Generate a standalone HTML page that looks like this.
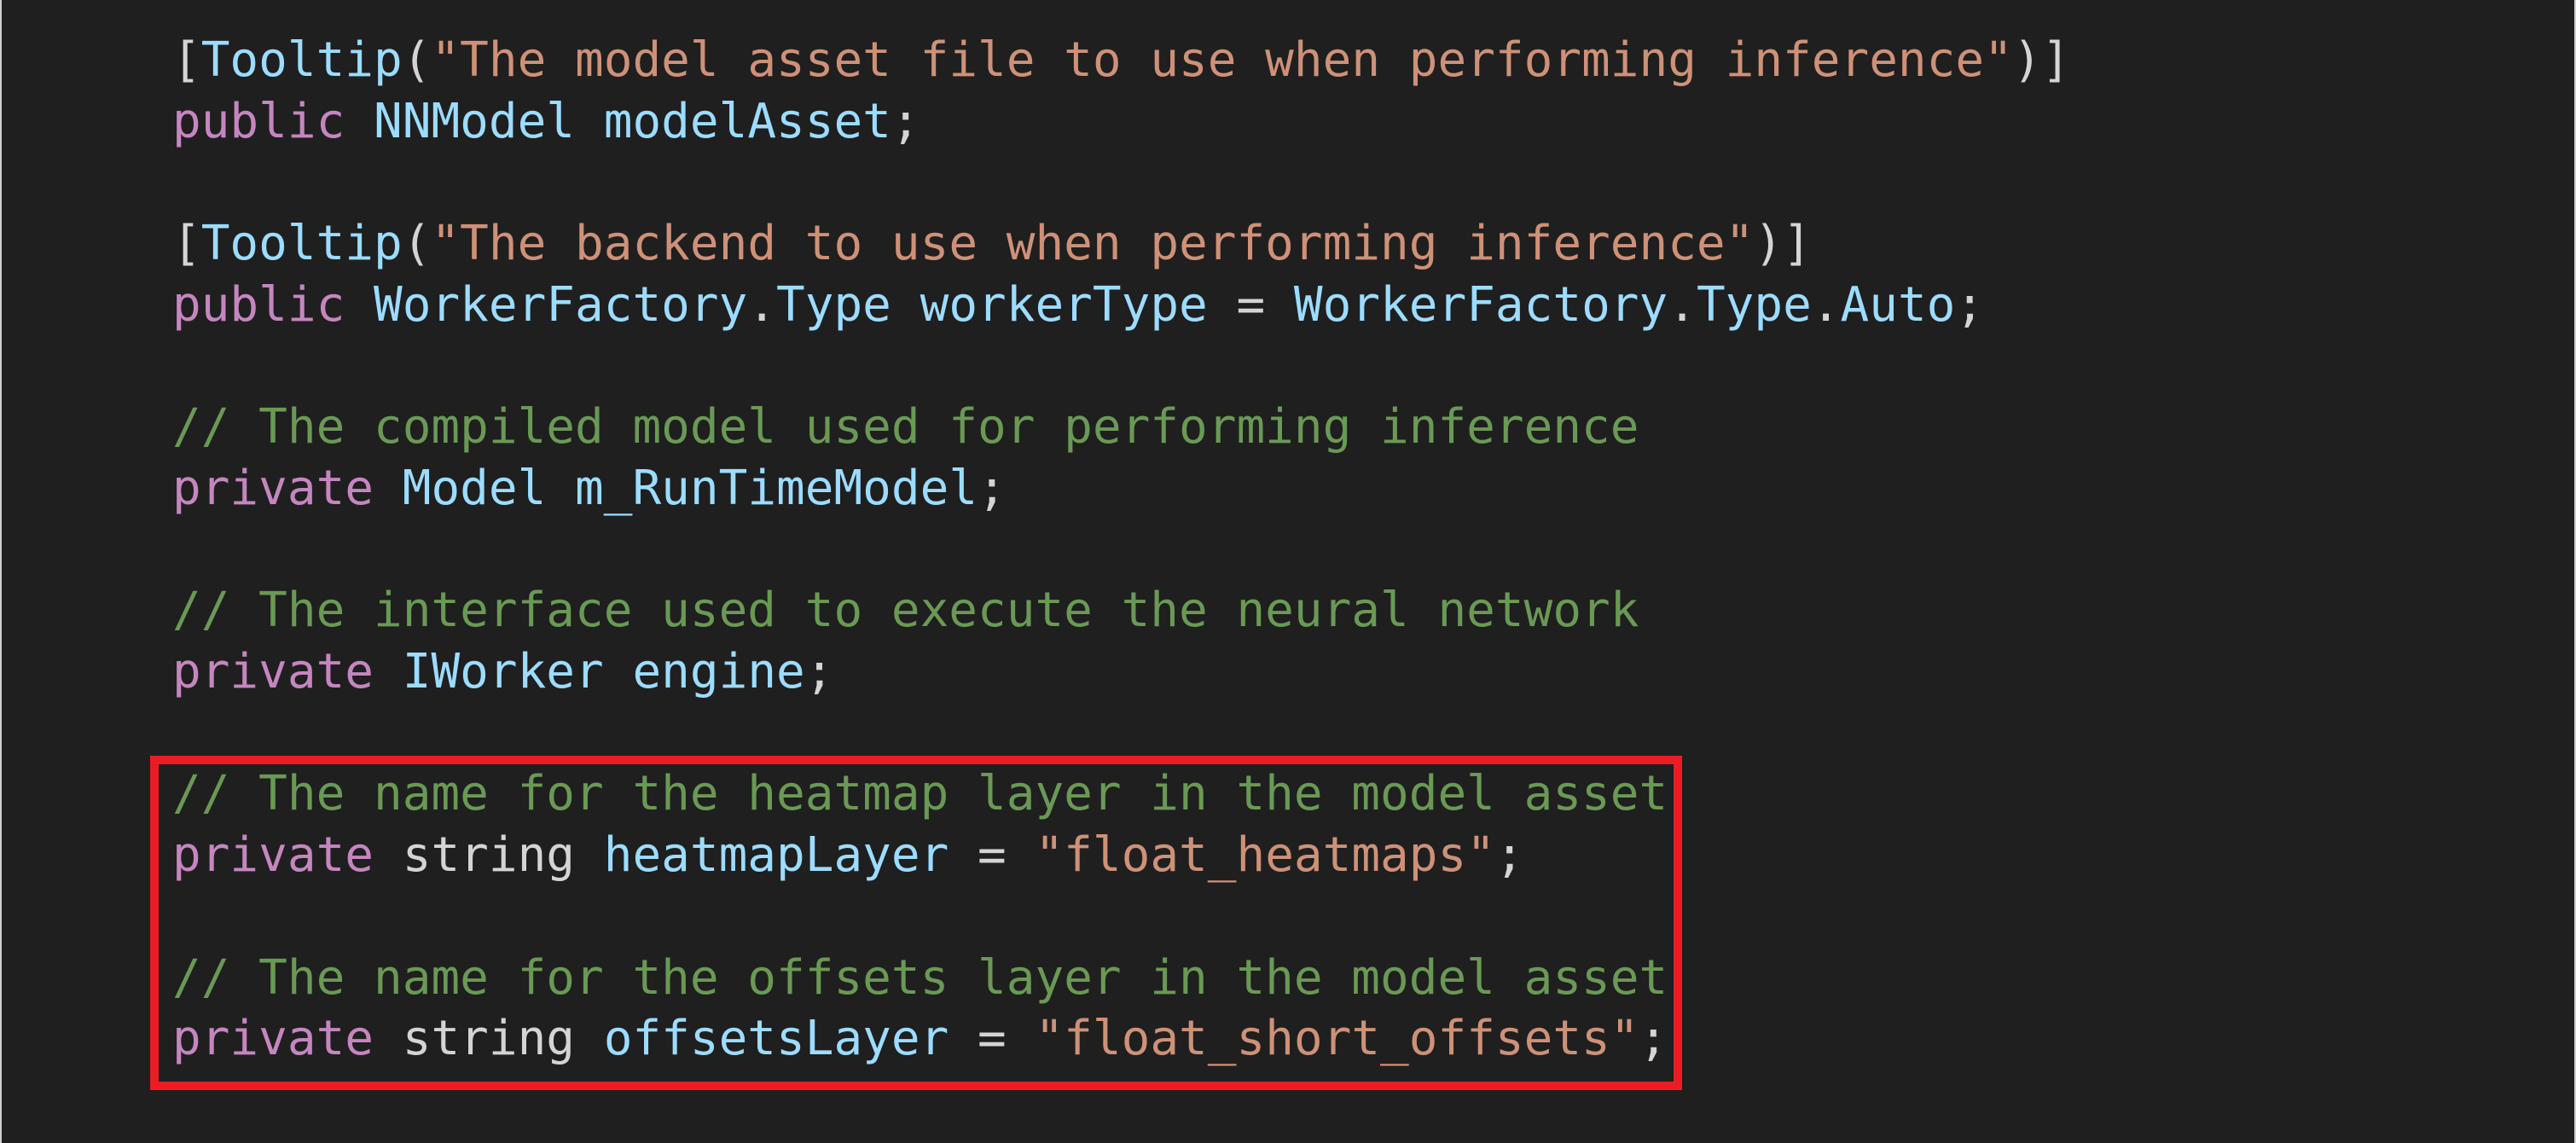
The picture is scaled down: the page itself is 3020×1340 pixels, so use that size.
<!DOCTYPE html>
<html><head><meta charset="utf-8"><style>
html,body{margin:0;padding:0}
body{width:3020px;height:1340px;background:#1f1f1f;position:relative;overflow:hidden;border-left:2px solid #cfcfcf;border-right:2px solid #cfcfcf;box-sizing:border-box}
pre{position:absolute;left:200px;top:35px;margin:0;font-family:"DejaVu Sans Mono","Liberation Mono",monospace;font-size:56px;line-height:71.7px;color:#d4d4d4;white-space:pre}
.k{color:#c586c0}.t{color:#9cdcfe}.s{color:#ce9178}.c{color:#6a9955}
.box{position:absolute;left:174px;top:886px;width:1776px;height:372px;border:10px solid #ec1c24}
</style></head><body>
<pre>[<span class="t">Tooltip</span>(<span class="s">"The model asset file to use when performing inference"</span>)]
<span class="k">public</span> <span class="t">NNModel</span> <span class="t">modelAsset</span>;

[<span class="t">Tooltip</span>(<span class="s">"The backend to use when performing inference"</span>)]
<span class="k">public</span> <span class="t">WorkerFactory</span>.<span class="t">Type</span> <span class="t">workerType</span> = <span class="t">WorkerFactory</span>.<span class="t">Type</span>.<span class="t">Auto</span>;

<span class="c">// The compiled model used for performing inference</span>
<span class="k">private</span> <span class="t">Model</span> <span class="t">m_RunTimeModel</span>;

<span class="c">// The interface used to execute the neural network</span>
<span class="k">private</span> <span class="t">IWorker</span> <span class="t">engine</span>;

<span class="c">// The name for the heatmap layer in the model asset</span>
<span class="k">private</span> string <span class="t">heatmapLayer</span> = <span class="s">"float_heatmaps"</span>;

<span class="c">// The name for the offsets layer in the model asset</span>
<span class="k">private</span> string <span class="t">offsetsLayer</span> = <span class="s">"float_short_offsets"</span>;</pre>
<div class="box"></div>
</body></html>
